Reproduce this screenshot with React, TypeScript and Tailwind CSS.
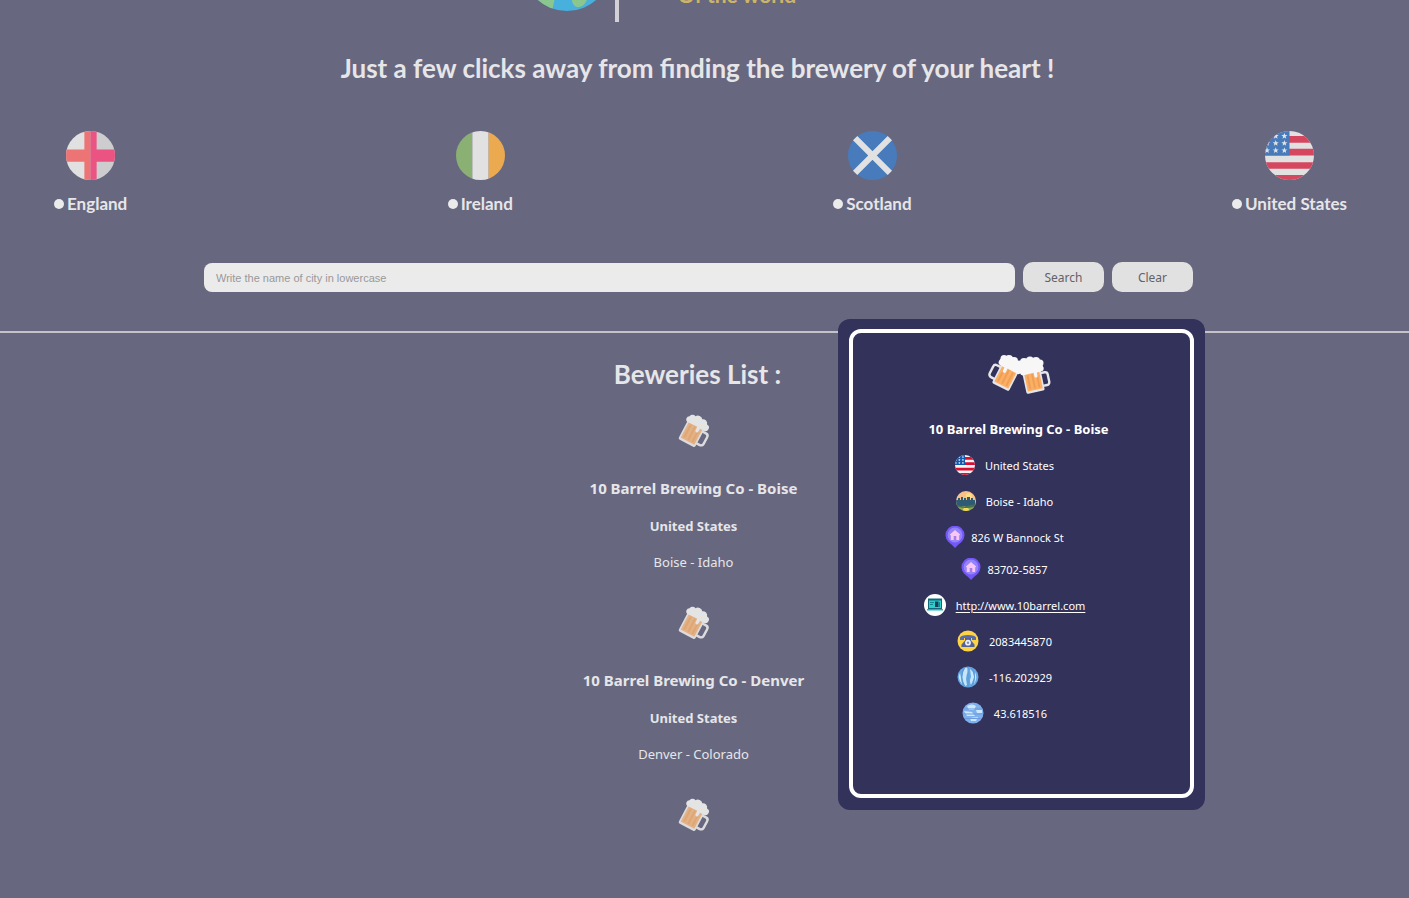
import type { ReactNode } from "react";

type IconProps = { className?: string };

const STAR = "M0-2.2.6-.7 2.1-.7.9.3 1.3 1.8 0 .9-1.3 1.8-.9.3-2.1-.7-.6-.7Z";

function Globe({ className }: IconProps) {
  return (
    <svg viewBox="0 0 88 88" className={className} aria-hidden="true">
      <clipPath id="globe">
        <circle cx="44" cy="44" r="44" />
      </clipPath>
      <g clipPath="url(#globe)">
        <rect width="88" height="88" fill="#48b0dc" />
        <path d="M0 20 20 24 34 50 33 70 29 88H0Z" fill="#8cc68f" />
        <path d="M46 30H72L66 68C65 78 61 84 55 84 50 84 48 78 48 68Z" fill="#8cc68f" />
      </g>
    </svg>
  );
}

function England({ className }: IconProps) {
  return (
    <svg viewBox="0 0 48 48" className={className} aria-hidden="true">
      <clipPath id="eng">
        <circle cx="24" cy="24" r="24" />
      </clipPath>
      <g clipPath="url(#eng)">
        <path d="M0 0h24v48H0z" fill="#e1e1e1" />
        <path d="M24 0h24v48H24z" fill="#cdcdcf" />
        <path d="M18 0h6v48h-6V30H0V18h18z" fill="#ec7474" />
        <path d="M24 0h6v18h18v12H30v18h-6z" fill="#ea5382" />
      </g>
    </svg>
  );
}

function Ireland({ className }: IconProps) {
  return (
    <svg viewBox="0 0 48 48" className={className} aria-hidden="true">
      <clipPath id="ire">
        <circle cx="24" cy="24" r="24" />
      </clipPath>
      <g clipPath="url(#ire)">
        <path d="M0 0h16v48H0z" fill="#8ab073" />
        <path d="M16 0h16v48H16z" fill="#e1e1e1" />
        <path d="M32 0h16v48H32z" fill="#eba950" />
      </g>
    </svg>
  );
}

function Scotland({ className }: IconProps) {
  return (
    <svg viewBox="0 0 48 48" className={className} aria-hidden="true">
      <circle cx="24" cy="24" r="24" fill="#477bbb" />
      <path d="M7 7 41 41M41 7 7 41" stroke="#e1e1e1" strokeWidth="6" />
    </svg>
  );
}

function UnitedStates({ className, bright = false }: IconProps & { bright?: boolean }) {
  const id = bright ? "us-bright" : "us-dim";
  const white = bright ? "#f8f4f6" : "#e1e1e1";
  const red = bright ? "#d80f32" : "#d5475f";
  const blue = bright ? "#1259ad" : "#477bbb";
  return (
    <svg viewBox="0 0 48 48" className={className} aria-hidden="true">
      <clipPath id={id}>
        <circle cx="24" cy="24" r="24" />
      </clipPath>
      <g clipPath={`url(#${id})`}>
        <path d="M0 0h48v48H0z" fill={white} />
        <path d="M0 5h48v6.500H0zM0 17.500h48V24H0zM0 30.500h48V37H0zM0 43h48v5H0z" fill={red} />
        <path d="M0 0h24v24H0z" fill={blue} />
        {[5, 12, 19].map((y) =>
          [2, 10.500, 19].map((x) => (
            <path key={`${x}-${y}`} d={STAR} transform={`translate(${x} ${y}) scale(1.4)`} fill={white} />
          )),
        )}
      </g>
    </svg>
  );
}

function MugShape({ dim = false }: { dim?: boolean }) {
  const glass = dim ? "#dcdcdd" : "#e6e6ea";
  const beer = dim ? "#e5b184" : "#fcae62";
  const stripe = dim ? "#dba777" : "#ee9f57";
  const foam = dim ? "#e4e4e5" : "#f7f7f8";
  return (
    <>
      <path d="M20 11h4.500a3 3 0 0 1 3 3v8a3 3 0 0 1-3 3H20" fill="none" stroke={glass} strokeWidth="2.600" />
      <path d="M1 5h20v23q0 2-2 2H3q-2 0-2-2Z" fill={glass} />
      <path d="M2.800 7h16.400v20.500H2.800Z" fill={beer} />
      <path d="M6 11v14M11 11v14M16 13v12" stroke={stripe} strokeWidth="2" strokeLinecap="round" />
      <path
        d="M1 9.500A3.500 3.500 0 0 1 .5 3 4 4 0 0 1 6 0a5 5 0 0 1 8-.5 4.500 4.500 0 0 1 7 2.500 3.700 3.700 0 0 1 0 7.500h-4.500v3.500a1.700 1.700 0 0 1-3.500 0V9Z"
        fill={foam}
      />
    </>
  );
}

function BeerMug({ className }: IconProps) {
  return (
    <svg viewBox="0 0 36 38" className={className} aria-hidden="true">
      <g transform="translate(14.500 2.500) rotate(28) scale(.94)">
        <MugShape dim />
      </g>
    </svg>
  );
}

function CheersMugs({ className }: IconProps) {
  return (
    <svg viewBox="0 0 64 44" className={className} aria-hidden="true">
      <g transform="translate(35.500 13.500) rotate(27) scale(-.95 .95)">
        <MugShape />
      </g>
      <g transform="translate(33 14) rotate(-12) scale(.93)">
        <MugShape />
      </g>
      <g fill="#f7f7f8">
        <circle cx="17" cy="5.500" r="3.500" />
        <circle cx="22" cy="6" r="4" />
        <circle cx="27" cy="8" r="4" />
        <circle cx="32" cy="11" r="3.500" />
        <circle cx="37" cy="9" r="4" />
        <circle cx="43" cy="8" r="4.500" />
        <circle cx="49" cy="8" r="4" />
        <circle cx="53" cy="10" r="3.500" />
        <path d="M15 8 28 7l6 4 6-3 13 0v5l-16 4-5 2-6-3Z" />
      </g>
    </svg>
  );
}

function CityIcon() {
  return (
    <svg viewBox="0 0 20 20" className="size-5" aria-hidden="true">
      <clipPath id="city">
        <circle cx="10" cy="10" r="10" />
      </clipPath>
      <g clipPath="url(#city)">
        <path d="M0 0h20v20H0z" fill="#f9c188" />
        <circle cx="13" cy="5" r="3" fill="#fddd86" />
        <path d="M0 9h2V7h2v2h1V6h2v3h1V7h2v2h1V6h3v3h1V7h2v2h2v6H0z" fill="#2f5a74" />
        <path d="M0 13q5 3 10 2t10-2v7H0z" fill="#477052" />
        <path d="M2 16q8 2 16 0v4H2z" fill="#8bae49" />
        <path d="M8 17h4l2 3H6z" fill="#f5d661" />
      </g>
    </svg>
  );
}

function PinIcon() {
  return (
    <svg viewBox="0 0 20 22" className="h-[22px] w-5" aria-hidden="true">
      <path d="M10 22Q7.500 19 3.500 16A9.500 9.500 0 1 1 16.500 16Q12.500 19 10 22Z" fill="#7457f7" />
      <circle cx="10" cy="9" r="7.400" fill="#9583fb" />
      <path d="M4.800 8.600 10 4l5.200 4.600-1 1V14H5.800V9.600Z" fill="#f8c8f4" />
      <path d="M8.700 10h2.600v4H8.700z" fill="#a77be8" />
    </svg>
  );
}

function WebsiteIcon() {
  return (
    <svg viewBox="0 0 22 22" className="size-[22px]" aria-hidden="true">
      <circle cx="11" cy="11" r="11" fill="#fff" />
      <path d="M4 4.500h14v10.500H4z" fill="#13677b" />
      <path d="M5 6.500h12V14H5z" fill="#2bd0cb" />
      <path d="M11 7.500h3.500V13H11z" fill="#173f59" />
      <path d="M6 8.500h4M6 10.500h3M15.500 8v5" stroke="#13888f" />
      <path d="M3 15h16v1.500H3z" fill="#20b4b5" />
    </svg>
  );
}

function PhoneIcon() {
  return (
    <svg viewBox="0 0 22 22" className="size-[22px]" aria-hidden="true">
      <circle cx="11" cy="11" r="10.500" fill="#fdd443" />
      <path d="M3 10V7.500Q4 5 11 5t8 2.500V10h-4V8H7v2Z" fill="#5b6ca6" />
      <path d="M8 8h6v2.500l3.500 4V17h-13v-2.500l3.500-4Z" fill="#536398" />
      <circle cx="11" cy="12.700" r="2.900" fill="#edf0f8" />
      <circle cx="11" cy="12.700" r="1.200" fill="#7d8cbb" />
    </svg>
  );
}

function LongitudeIcon() {
  return (
    <svg viewBox="0 0 22 22" className="size-[22px]" aria-hidden="true">
      <circle cx="11" cy="11" r="10.500" fill="#66a7e2" />
      <path
        d="M8 2q4-1 3 4-2 3-2 7l1 6-2 1Q3 10 8 2ZM13 3q5 4 4 9l-3 7q-2-4 0-8ZM3 7l1 5 1 6Q0 12 3 7ZM18 6q3 6-1 12l1-6Z"
        fill="#c5e6fb"
      />
      <path d="M8 1Q1 11 8 21M14 1q7 10 0 20M11 1v20" fill="none" stroke="#5a98d6" />
    </svg>
  );
}

function LatitudeIcon() {
  return (
    <svg viewBox="0 0 22 22" className="size-[22px]" aria-hidden="true">
      <circle cx="11" cy="11" r="10.500" fill="#7fb0ee" />
      <path d="M5 4q5-3 9 0l-2 4H7ZM2 9l8 1 3 4H5ZM14 8h6v3h-5ZM8 16l8-1-2 4H9Z" fill="#cbe8fd" />
      <path d="M2 7h18M1 12h20M3 16.500h16" stroke="#6f9bdc" />
    </svg>
  );
}

const countries = [
  { name: "England", Flag: England },
  { name: "Ireland", Flag: Ireland },
  { name: "Scotland", Flag: Scotland },
  { name: "United States", Flag: UnitedStates },
];

const breweries = [
  { name: "10 Barrel Brewing Co - Boise", country: "United States", place: "Boise - Idaho" },
  { name: "10 Barrel Brewing Co - Denver", country: "United States", place: "Denver - Colorado" },
];

function DetailRow({ icon, tight = false, children }: { icon: ReactNode; tight?: boolean; children: ReactNode }) {
  return (
    <li className={tight ? "flex h-5 items-center justify-center gap-1.5" : "flex h-5 items-center justify-center gap-2.5"}>
      {icon}
      <span className="pt-0.5">{children}</span>
    </li>
  );
}

function BreweryDialog() {
  return (
    <section
      role="dialog"
      aria-labelledby="brewery-title"
      className="absolute top-[319px] right-[204px] w-[367px] rounded-xl bg-[#33325a] px-[11px] pt-2.5 pb-3 text-white"
    >
      <div className="rounded-xl border-4 border-white pt-5 pb-[71px]">
        <div className="pr-1.5">
          <CheersMugs className="mx-auto h-11 w-16" />
          <h2 id="brewery-title" className="mt-[22px] text-center text-[13px] leading-5 font-bold">
            10 Barrel Brewing Co - Boise
          </h2>
        </div>
        <ul className="mt-4 flex flex-col gap-4 pr-[34px] text-[11px] leading-5">
          <DetailRow icon={<UnitedStates bright className="size-5" />}>United States</DetailRow>
          <DetailRow icon={<CityIcon />}>Boise - Idaho</DetailRow>
          <li>
            <ul className="flex flex-col gap-3">
              <DetailRow tight icon={<PinIcon />}>826 W Bannock St</DetailRow>
              <DetailRow tight icon={<PinIcon />}>83702-5857</DetailRow>
            </ul>
          </li>
          <DetailRow icon={<WebsiteIcon />}>
            <a href="http://www.10barrel.com" className="underline underline-offset-2">
              http://www.10barrel.com
            </a>
          </DetailRow>
          <DetailRow icon={<PhoneIcon />}>2083445870</DetailRow>
          <DetailRow icon={<LongitudeIcon />}>-116.202929</DetailRow>
          <DetailRow icon={<LatitudeIcon />}>43.618516</DetailRow>
        </ul>
      </div>
    </section>
  );
}

export default function App() {
  return (
    <div className="relative min-h-screen overflow-hidden bg-[#686780] font-['Noto_Sans',sans-serif] text-[#e6e6e8]">
      <header className="pr-3.5 font-['Lato',sans-serif]">
        <div className="flex h-[22px] items-end justify-center overflow-hidden pr-[76px]">
          <Globe className="mb-[11px] size-[88px] shrink-0" />
          <div className="ml-1 h-20 w-1 shrink-0 bg-[#d2d2d6]" />
          <p className="mb-[15px] ml-[59px] text-[21px] leading-6 font-bold text-[#cdb568]">Of the world</p>
        </div>
        <h1 className="mt-7 text-center text-[26px] leading-9 font-bold">
          Just a few clicks away from finding the brewery of your heart !
        </h1>
      </header>

      <form onSubmit={(event) => event.preventDefault()}>
        <fieldset className="mt-[45px] flex justify-between pr-[62px] pl-[54px] font-['Lato',sans-serif]">
          {countries.map(({ name, Flag }) => (
            <label key={name} className="flex flex-col items-center gap-3.5">
              <Flag className="size-[49px]" />
              <span className="flex items-center gap-[3px] text-[17px] leading-5 font-bold">
                <input type="radio" name="country" className="size-2.5 appearance-none rounded-full bg-[#ebebeb]" />
                {name}
              </span>
            </label>
          ))}
        </fieldset>
        <div className="mt-12 flex items-center gap-2 pr-[216px] pl-[204px]">
          <input
            type="text"
            aria-label="City"
            placeholder="Write the name of city in lowercase"
            className="h-[29px] min-w-0 flex-1 rounded-lg bg-[#ebebeb] px-3 pt-0.5 font-['Liberation_Sans',sans-serif] text-[11px] text-[#555] placeholder:text-[#999]"
          />
          <button type="submit" className="h-[30px] w-[81px] rounded-[10px] bg-[#e1e1e1] pt-0.5 text-xs text-[#62626a]">
            Search
          </button>
          <button type="reset" className="h-[30px] w-[81px] rounded-[10px] bg-[#e1e1e1] pt-0.5 text-xs text-[#62626a]">
            Clear
          </button>
        </div>
      </form>

      <hr className="mt-[39px] border-t-2 border-[#c3c3c9]" />

      <main className="pr-3.5">
        <h2 className="mt-[23px] text-center font-['Lato',sans-serif] text-[26px] leading-9 font-bold">
          Beweries List :
        </h2>
        <ul className="mt-[19px] pr-2 text-center">
          {breweries.map(({ name, country, place }) => (
            <li key={name} className="h-48">
              <BeerMug className="mx-auto h-[38px] w-9" />
              <h3 className="mt-[27px] text-[15px] leading-6 font-bold">{name}</h3>
              <p className="mt-4 text-[13px] leading-5 font-bold">{country}</p>
              <p className="mt-4 text-[13px] leading-5">{place}</p>
            </li>
          ))}
          <li>
            <BeerMug className="mx-auto h-[38px] w-9" />
          </li>
        </ul>
      </main>

      <BreweryDialog />
    </div>
  );
}
